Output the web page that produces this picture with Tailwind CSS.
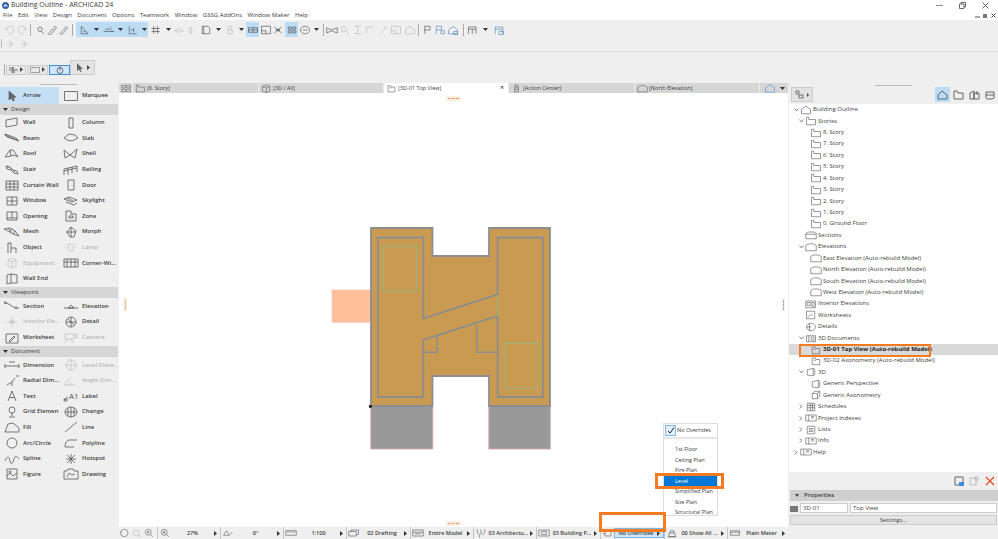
<!DOCTYPE html>
<html lang="en">
<head>
<meta charset="UTF-8">
<title>Building Outline - ARCHICAD 24</title>
<script src="https://cdn.jsdelivr.net/npm/@tailwindcss/browser@4"></script>
</head>
<body class="relative w-[998px] h-[539px] overflow-hidden bg-[#efefef] font-['Open_Sans',sans-serif] text-[#3c3c3c]">

<!-- title + menu -->
<div class="flex items-center h-[10px] bg-white text-[7px] pl-[2px]">
  <svg class="w-[7px] h-[7px] mr-[2px]" viewBox="0 0 8 8"><circle cx="4" cy="4" r="4" fill="#2d5fa8"/><path d="M1 5l3-3 3 3z" fill="#cfe0f5"/></svg>
  <span>Building Outline - ARCHICAD 24</span>
  <div class="ml-auto flex items-center gap-[16px] pr-[9px]">
    <svg class="w-[7px] h-[7px]" viewBox="0 0 7 7"><path d="M0 3.5h7" stroke="#888"/></svg>
    <svg class="w-[7px] h-[7px]" viewBox="0 0 7 7" fill="none" stroke="#444" stroke-width=".8"><path d="M.5 2h4.500v4.500h-4.500zM2 2V.5h4.500V5H5"/></svg>
    <svg class="w-[7px] h-[7px]" viewBox="0 0 7 7"><path d="M.5.5l6 6M6.500.5l-6 6" stroke="#444" stroke-width=".8"/></svg>
  </div>
</div>
<div class="flex items-center h-[10px] bg-white text-[6px] pl-[3px] gap-[5.500px]">
  <span>File</span><span>Edit</span><span>View</span><span>Design</span><span>Document</span><span>Options</span><span>Teamwork</span><span>Window</span><span>GSSG AddOns</span><span>Window Maker</span><span>Help</span>
  <div class="ml-auto flex items-center gap-[3px] pr-[2px]">
    <svg class="w-[5px] h-[5px]" viewBox="0 0 5 5"><path d="M0 4h5" stroke="#555"/></svg>
    <svg class="w-[5px] h-[5px]" viewBox="0 0 5 5"><path d="M0 1h4v4h-4z" fill="#777"/></svg>
    <svg class="w-[5px] h-[5px]" viewBox="0 0 5 5"><path d="M.5.5l4 4M4.500.5l-4 4" stroke="#444"/></svg>
  </div>
</div>

<!-- toolbars -->
<div class="h-[32px] border-b border-[#dcdcdc] pt-[2px]">
  <div id="bar1" class="flex items-center h-[15px] pl-[3px]"></div>
  <div id="bar2" class="flex items-center h-[13px] pl-[1px]"></div>
</div>
<div class="h-[31px] flex items-center pl-[4px] pb-[1px]">
  <div class="w-px h-[11px] bg-[#aaa] mr-px mt-[5px]"></div>
  <div class="flex items-center h-[10px] w-[20px] border border-[#ccc] bg-[#e8e8e8] mt-[5px] justify-center gap-[2px]">
    <svg class="w-[9px] h-[6px]" viewBox="0 0 9 6" fill="none" stroke="#555" stroke-width=".8"><path d="M0 1h5M0 3h9M2 5h4M4 0v6"/></svg><svg class="w-[3px] h-[5px]" viewBox="0 0 3 5"><path d="M0 0l3 2.500-3 2.500z" fill="#444"/></svg>
  </div>
  <div class="flex items-center h-[10px] w-[21px] border border-[#ccc] bg-[#e8e8e8] mt-[5px] ml-px justify-center gap-[2px]">
    <svg class="w-[10px] h-[6px]" viewBox="0 0 10 6" fill="none" stroke="#555" stroke-width=".8" stroke-dasharray="1 .6"><path d="M.5.5h9v5h-9z"/></svg><svg class="w-[3px] h-[5px]" viewBox="0 0 3 5"><path d="M0 0l3 2.500-3 2.500z" fill="#444"/></svg>
  </div>
  <div class="flex items-center h-[10px] w-[21px] border border-[#3f8fd6] bg-[#cfe5f8] mt-[5px] ml-px justify-center">
    <svg class="w-[8px] h-[8px]" viewBox="0 0 8 8" fill="none" stroke="#555" stroke-width=".8"><circle cx="4" cy="4.500" r="3"/><path d="M4 0v4.500"/></svg>
  </div>
  <div class="flex items-center h-[15px] w-[25px] border border-[#ccc] bg-[#e4e4e4] justify-center gap-[4px]">
    <svg class="w-[7px] h-[9px]" viewBox="0 0 7 9"><path d="M1 0v8l2-1.500 1.200 2.500 1.300-.6-1.200-2.400h2.700z" fill="#666"/></svg><svg class="w-[3px] h-[5px]" viewBox="0 0 3 5"><path d="M0 0l3 2.500-3 2.500z" fill="#444"/></svg>
  </div>
</div>

<div class="flex h-[456px]">
  <!-- tool box -->
  <aside class="w-[119px] shrink-0 pt-[4px] relative">
    <div class="absolute top-[1px] left-[40px] w-[37px] h-px bg-[#bbb]"></div>
    <div id="tools"></div>
  </aside>

  <!-- views -->
  <main class="w-[669px] shrink-0 flex flex-col">
    <div id="tabs" class="flex h-[10px] bg-[#d6d6d6] text-[5.500px] items-stretch"></div>
    <div class="relative flex-1 bg-white">
      <div class="absolute left-[327px] top-[3px] w-[15px] h-[5px] bg-[#fdeee2] flex items-center justify-center"><div class="w-[11px] border-t border-dashed border-[#e8a070]"></div></div>
      <div class="absolute left-[327px] bottom-[1px] w-[15px] h-[5px] bg-[#fdeee2] flex items-center justify-center"><div class="w-[11px] border-t border-dashed border-[#e8a070]"></div></div>
      <div class="absolute left-[4px] top-[205px] w-[4px] h-[13px] bg-[#fdeee2] flex items-center justify-center"><div class="h-[10px] border-l border-dashed border-[#e8b898]"></div></div>
      <div class="absolute right-[3px] top-[205px] w-[4px] h-[13px] bg-[#f3f3f3] flex items-center justify-center"><div class="h-[10px] border-l border-dashed border-[#aaa]"></div></div>
      <!-- plan: svg coordinates are page coordinates -->
      <svg class="absolute left-0 top-0 w-[669px] h-[423px]" viewBox="119 93 669 423" fill="none">
        <path d="M332 290h38.300v32.300h-38.300z" fill="#ffbf9b" stroke="#f6c8b4" stroke-width=".8"/>
        <path d="M370.800 406.500h62v42.500h-62zM488.800 406.500h61.500v42.500h-61.500z" fill="#999" stroke="#d8a6a6" stroke-width=".8"/>
        <path d="M371 228h61.500v28h56.500v-28h61v178h-61v-30h-56.500v30h-61.500z" fill="#c99a52" stroke="#8d8d8d" stroke-width="1.800"/>
        <path d="M378 237.500h45.300v81L497.700 294.300v-56.800h45.300v159.500h-45.300v-81L423.300 340v57h-45.300z" stroke="#8d8d8d" stroke-width="1.800"/>
        <path d="M423.300 352.300h14v-17M476.700 325v27.300h21" stroke="#8d8d8d" stroke-width="1.500"/>
        <path d="M497.700 295v21" stroke="#8db98a" stroke-width="1"/>
        <path d="M383 246h33.700v45.300h-33.700zM504.300 343.300h33.700v45h-33.700z" stroke="#8db98a" stroke-width=".8"/>
        <path d="M369 405h2.800v2.800h-2.800z" fill="#222"/>
      </svg>
    </div>
    <div id="scalebar" class="flex items-center h-[12px] text-[5.500px] bg-[#efefef]"></div>
  </main>

  <!-- navigator -->
  <aside class="flex-1 flex flex-col">
    <div class="h-[21px] flex items-center relative pl-[3px]">
      <div class="absolute top-[2px] left-[87px] w-[37px] h-px bg-[#bbb]"></div>
      <div class="flex items-center justify-center gap-[3px] w-[22px] h-[15px] bg-[#e2e2e2] border border-[#ccc] mt-[2px]">
        <svg class="w-[9px] h-[9px]" viewBox="0 0 9 9" fill="none" stroke="#555" stroke-width=".8"><path d="M1 1h3v3h-3zM4 5h4v3h-4z"/></svg><svg class="w-[2px] h-[4px]" viewBox="0 0 2 4"><path d="M0 0l2 2-2 2z" fill="#444"/></svg>
      </div>
      <div class="ml-auto flex items-center pr-[1px] mt-[2px]">
        <div class="w-[15px] h-[15px] bg-[#bcdcf4] flex items-center justify-center"><svg class="w-[11px] h-[10px]" viewBox="0 0 11 10" fill="none" stroke="#444" stroke-width=".8"><path d="M1 9V5l4-4 5 4v4z"/></svg></div>
        <div class="w-[16px] flex justify-center"><svg class="w-[11px] h-[10px]" viewBox="0 0 11 10" fill="none" stroke="#444" stroke-width=".8"><path d="M1 1h3l1 2h5v6h-9z"/></svg></div>
        <div class="w-[16px] flex justify-center"><svg class="w-[11px] h-[10px]" viewBox="0 0 11 10" fill="none" stroke="#444" stroke-width=".8"><path d="M1 3l4-2v8h-4zM5 3h5v6h-5zM8 1v4"/></svg></div>
        <div class="w-[15px] flex justify-center"><svg class="w-[10px] h-[10px]" viewBox="0 0 10 10" fill="none" stroke="#444" stroke-width=".8"><path d="M1 2h8v6l-2 1h-5l-1-1zM1 5h8"/></svg></div>
      </div>
    </div>
    <div id="tree" class="h-[368px] bg-white text-[6px] pl-[2px] pt-[-1px] ml-px"></div>
    <div class="h-[18px] flex items-center justify-end gap-[5px] pr-[3px]">
      <svg class="w-[10px] h-[10px]" viewBox="0 0 10 10" fill="none" stroke="#666"><path d="M1 1h8v8h-8z"/><path d="M5 6h5v4h-5z" fill="#3b8fe0" stroke="none"/></svg>
      <svg class="w-[10px] h-[10px]" viewBox="0 0 10 10" fill="none" stroke="#bbb"><path d="M1 2h6v7h-6zM6 1h3v3h-3z"/></svg>
      <svg class="w-[10px] h-[10px] ml-[1px]" viewBox="0 0 10 10"><path d="M1 1l8 8M9 1l-8 8" stroke="#e8502a" stroke-width="1.300"/></svg>
    </div>
    <div class="h-[11px] bg-[#cfcfcf] ml-[2px] flex items-center text-[6px] font-semibold pl-[5px] gap-[5px]">
      <svg class="w-[4px] h-[3px]" viewBox="0 0 4 3"><path d="M0 0h4l-2 3z" fill="#444"/></svg>Properties
    </div>
    <div class="flex items-center h-[10px] mt-[2px] ml-[2px] text-[6px] gap-[2px]">
      <svg class="w-[8px] h-[7px] shrink-0" viewBox="0 0 8 7"><path d="M0 1h8v6h-8z" fill="#777"/></svg>
      <div class="w-[48px] h-[10px] bg-white border border-[#ccc] flex items-center pl-[2px]">3D-01</div>
      <div class="flex-1 h-[10px] bg-white border border-[#ccc] flex items-center pl-[2px] mr-px">Top View</div>
    </div>
    <div class="h-[10px] mt-[2px] ml-[2px] mr-px bg-[#e4e4e4] border border-[#ccc] flex items-center justify-center text-[6px]">Settings...</div>
  </aside>
</div>

<!-- status bar -->
<div class="flex items-center h-[11px] text-[5.800px]">
  <span class="pl-[1px]">Click an Element or Draw a Selection Area. Press and Hold Ctrl+Shift to Toggle Element/Sub-Element Selection.</span>
  <svg class="ml-auto w-[9px] h-[8px]" viewBox="0 0 9 8" fill="none" stroke="#555"><path d="M.5 1h6v5h-6zM3 3h5.500v4.500h-5.500z"/></svg>
  <div class="w-[67px] h-[11px] ml-[6px] mr-[5px] bg-[#f4f4f4] flex items-center pl-[3px] text-[6.500px] text-[#a8a8a8]">GRAPHISOFT ID</div>
</div>

<!-- scale preset popup -->
<div class="absolute left-[663px] top-[423px] w-[55px] h-[93px] bg-white border border-[#ddd] text-[5.500px] z-10">
  <div class="flex items-center h-[15px] border-b-2 border-[#e5e5e5] gap-[1px]">
    <div class="w-[11px] h-[11px] ml-px border border-[#7db8e8] bg-[#e3f0fb] flex items-center justify-center"><svg class="w-[8px] h-[7px]" viewBox="0 0 8 7" fill="none"><path d="M1 4l2 2 4-5.500" stroke="#222"/></svg></div>
    <span>No Overrides</span>
  </div>
  <div class="pt-[5px] leading-[10.500px]">
    <div class="pl-[11px]">1st Floor</div>
    <div class="pl-[11px]">Ceiling Plan</div>
    <div class="pl-[11px]">Fire Plan</div>
    <div class="pl-[11px] bg-[#0078d7] text-white">Level</div>
    <div class="pl-[11px]">Simplified Plan</div>
    <div class="pl-[11px]">Site Plan</div>
    <div class="pl-[11px]">Structural Plan</div>
  </div>
</div>

<!-- orange callouts -->
<div class="absolute left-[655px] top-[473px] w-[69px] h-[16px] border-[3px] border-[#f47b20] z-20"></div>
<div class="absolute left-[599px] top-[512px] w-[67px] h-[20px] border-[3px] border-[#f47b20] z-20"></div>
<div class="absolute left-[799px] top-[344px] w-[132px] h-[13px] border-2 border-[#f47b20] z-20"></div>

<script>
// stroke icons, 16x12 box
const P = {
  arrow:'M5 1v9l2.500-2 1.500 3 1.500-.7-1.500-3h3z', marquee:'M1.500 1.500h13v9h-13z', wall:'M2 3l11-2v7l-11 2z', column:'M6 1h4v10h-4z',
  beam:'M1 2l11 4 3 3-12-4zM1 2v1l12 5', slab:'M1 6l5-4 6 1 3 3-6 3-5-1z', roof:'M1 9l5-7 3 0 5 7-4-2-3 1zM6 2l1 6', shell:'M1 2l6 5 7-6-2 9-5-3-5 3z',
  stair:'M2 2l4 1 3 3 4 1 1 3-4-1-3-3-4-1zM4 2v2M7 4v2M10 6v2', railing:'M1 5l13-3M1 5v6M5 4v7M9 3v6M14 2v6M1 7l13-3', curtain:'M2 2h12v9h-12zM6 2v9M10 2v9M2 5h12M2 8h12', door:'M5 1h6v10h-6zM9 6v.5',
  window:'M3 2h10v8h-10zM8 2v8M3 6h10', skylight:'M1 4l5-2 8 3-5 2zM3 7l8 3 3-2M4 3l6 3', opening:'M3 2h10v8h-10zM8 2v6M3 8h10', zone:'M3 1h5v3h5v7h-10zM6 6h4v2h-4z',
  mesh:'M0 3l6-1 5 3 4 5-6-2-5-3zM4 2l3 4M9 3l-3 2M11 5l-2 3', morph:'M8 1l5 4-2 6h-4l-3-5zM8 1v10M3 6h10', object:'M4 1h3v5h5v5M4 1v10M7 6v5', lamp:'M5 5a3 3 0 1 1 6 0c0 2-1.500 2-1.500 4h-3c0-2-1.500-2-1.500-4zM2 5h1M13 5h1M4 1l1 1M12 1l-1 1',
  equip:'M8 1l4 2v6l-4 2-4-2v-6zM4 3l4 2 4-2M8 5v6', corner:'M1 2h14v8h-14zM4 2v8M8 2v8M12 2v8M1 5h14', wallend:'M3 2l4-1v9l-4 1zM7 1l6 1v8l-6 0',
  section:'M0 3h3l8 5h4M1 1v3M12 6v3M3 3l-1 1', elevation:'M1 8h14M5 8l3-3 3 3z', interior:'M8 1v10M3 6h10M6 6a2 2 0 1 0 4 0 2 2 0 1 0-4 0', detail:'M3 6a5 5 0 1 0 10 0 5 5 0 1 0-10 0M3 6h10M8 1v10M5 3l6 6',
  worksheet:'M2 2h12v9h-12zM5 9l5-5 1 1-5 5z', camera:'M2 2h9v5h-9zM11 3l3-1v4l-3-1zM4 7l-2 4M8 7l2 4', dim:'M1 7h14M1 5v4M15 5v4M5 3h6', leveldim:'M3 6a5 5 0 1 0 10 0 5 5 0 1 0-10 0M8 0v12M2 6h12',
  radial:'M8 7L3 10M8 7l3-4M8 7v4M12 1h3', angle:'M1 10h11M1 10l7-8M7 7q1 1 1 3', text:'M4 11L8 1l4 10M5.500 7.500h5', label:'M1 10l4-3M1 9h3v2h-3z',
  grid:'M5 4a3 3 0 1 0 6 0 3 3 0 1 0-6 0M8 7v3M5 11h6', change:'M2 6a6 5 0 1 0 12 0 6 5 0 1 0-12 0M2 6h12M8 1v10M5 2v8M11 2v8', fill:'M1 11l3-8 5-1 6 5v4z', line:'M2 11L14 1',
  arc:'M3 6a5 5 0 1 0 10 0 5 5 0 1 0-10 0', polyline:'M2 10c0-5 2-7 5-7h7M2 10h9', spline:'M1 8c2-5 4-5 5 0s3 2 4-2 3-3 5 0', hotspot:'M8 1v10M3 6h10M4 2l8 8M12 2l-8 8',
  figure:'M3 1h10v10h-10zM3 8l3-3 3 3 4-3M6 3a1 1 0 1 0 .1 0', drawing:'M1 3h3l1-2h5l1 2h4v8h-14zM4 9l2-4 3 2 3-1',
  undo:'M3 3v3h3M3 6a5 5 0 1 1 2 4', redo:'M13 3v3h-3M13 6a5 5 0 1 0-2 4', find:'M5 5a3 3 0 1 0 6 0 3 3 0 1 0-6 0M10 8l3 3', drop:'M3 11l6-6 2 2-6 6zM9 4l3-3 2 2-3 3',
  tri:'M3 11V1l9 10zM6 8h2', curveline:'M1 8h14M3 5h5l3-3M10 5l3 3', stairbar:'M3 1v10h10M5 6h4v3M9 3v3', hash:'M5 1v10M10 1v10M2 4h11M2 8h11', flat:'M2 7l6-3 6 3-6 2z', thin:'M6 2l3 1v6l-1 2-2-4z',
  doc:'M3 1h8l2 2v8h-10zM5 1v10', lock:'M5 6h6v5h-6zM6 6V3a2 2 0 0 1 4 0v3', bars:'M2 3h12v6h-12zM2 6h12M8 3v6', cross:'M3 2l10 8M13 2l-10 8M6 5h4v2h-4z', dots:'M3 2h4v3h-4zM9 2h4v3h-4zM3 7h4v3h-4zM9 7h4v3h-4z',
  rot:'M2 6a6 5 0 1 0 12 0 6 5 0 1 0-12 0M5 6h6', bow:'M1 3l6 3 8-3v7l-8-3-6 3z', mag:'M3 5a3.500 3.500 0 1 0 7 0 3.500 3.500 0 1 0-7 0M9 8l4 3', sigma:'M4 1h8M4 11h8M5 1l4 5-4 5', corn:'M3 11V2h9', pen:'M4 11l8-8M10 1l3 3', box:'M2 1h12v10h-12zM2 7h6v4', house:'M2 11V5l6-4 6 4v6z',
  flag:'M5 11V1h7v5h-7', flagplus:'M3 11V1h7v5h-7M9 7h5v4h-5z', roundhouse:'M2 11V6l6-5 6 5v5zM9 8h5v4h-5z', cabinet:'M2 11V2h10v9M2 5h10M7 5v6', cabblue:'M3 11V2h10v9M3 5h10M8 8h6v4h-6z', ghost:'M5 2a4 4 0 1 1 0 8M3 6h8', fold:'M1 10V1h4l1 2h9v7z', cube:'M2 3l6-2 5 2v7l-5 2-6-2zM2 3l6 2 5-2M8 5v7', page:'M3 2h4l1 2h5v7h-10zM5 5h3',
  tower:'M6 1h4l1 10h-6zM5 4h6M5 7h6', eleva:'M1 11V4c4-3 10-3 14 0v7z', grid4:'M1 1h6v4h-6zM9 1h6v4h-6zM1 7h6v4h-6zM9 7h6v4h-6z',
  story:'M2 11V1h3v3h9v7z', section2:'M1 11V4l3-2h8l3 2v7zM1 5h14', interiorel:'M1 2h13v9h-13zM3 4h4v4h-4zM9 4h3v5h-3z', sheet:'M2 1h11v10h-11zM4 9l4-4 2 2', circle:'M2 6a6 5 0 1 0 12 0 6 5 0 1 0-12 0M6 1v10M2 6h6', doc3d:'M2 3h12v8h-12zM5 3v8M8 5h4v4h-4z', view3d:'M3 4h7v7h-7zM3 4l3-3h7v7l-3 3M10 4l3-3', persp:'M3 3l8-2v10l-8-1zM11 1l2 2v6l-2 2', table:'M3 1h10v10h-10zM3 4h10M3 7h10M7 1v10M10 1v10', list:'M3 1h10v10h-10zM5 4h6M5 6h6M5 8h6', book:'M1 2h14v8h-14zM5 2v8M8 4h4M8 6h4',
  pan:'M2 6a5 5 0 1 0 10 0 5 5 0 1 0-10 0M2 6l2-2', zoom0:'M3 6a4 4 0 1 0 8 0 4 4 0 1 0-8 0M10 9l3 2', zoomin:'M3 5a4 4 0 1 0 8 0 4 4 0 1 0-8 0M5 5h4M7 3v4M10 8l3 3', angle0:'M2 9l4-6 4 6zM11 6h3', scale:'M1 3h14v6h-14zM4 3v3M8 3v3M12 3v3', layers:'M1 10V4h10v6zM4 4V2h10v6h-3', model:'M1 2h14v8h-14zM1 5h14M4 7h8', pens:'M3 1v4l3 4v3M13 1v4l-3 4M8 1v7', building:'M1 2h14v8h-14zM5 4h6v4h-6z', palette:'M4 2h8v8h-8zM1 4h3M1 7h3M6 4h4', mep:'M4 11V6h8v5zM6 6V3h4v3M2 11h12', plain:'M2 3h12v6h-12zM2 5h12'
};
const svg = (k, cls, stroke='#555', sw='.8', fill='none') => `<svg class="${cls}" viewBox="0 0 16 12" fill="${fill}" stroke="${stroke}" stroke-width="${sw}"><path d="${P[k]}"/></svg>`;
const arrowSm = '<svg class="w-[3px] h-[5px]" viewBox="0 0 3 5"><path d="M0 0l3 2.500-3 2.500z" fill="#333"/></svg>';
const arrowDn = '<svg class="w-[5px] h-[3px]" viewBox="0 0 5 3"><path d="M0 0h5l-2.500 3z" fill="#333"/></svg>';

// top toolbar: [icon, width, on, off]
const bar1 = [['undo',13,0,1],['redo',12,0,1],['|',5],['find',13],['drop',12],['drop',11],['|',7],['tri',17,1],['v',7,1],['curveline',17,1],['v',7,1],['stairbar',17,1],['v',7,1],['hash',15],['v',10],['flat',12,0,1],['thin',12,0,1],['_',2],['doc',14],['v',10],['_',1],['lock',12,0,1],['v',10],['bars',13,1],['box',13],['cross',12],['_',1],['dots',13,1],['rot',14],['v',9],['|',4],['bow',13],['mag',13,0,1],['sigma',13,0,1],['corn',12,0,1],['pen',13,0,1],['box',14,0,1],['house',13,0,1],['|',5],['flag',12],['flagplus',14],['roundhouse',12],['|',8],['cabinet',12],['v',13],['cabblue',13]];
document.getElementById('bar1').innerHTML = bar1.map(([k,w,on,off]) => {
  const bg = on ? 'bg-[#bcdcf4]' : '';
  let inner = '';
  if (k === '|') inner = '<div class="w-px h-[12px] bg-[#aaa]"></div>';
  else if (k === 'v') inner = arrowDn;
  else if (k !== '_') inner = svg(k, 'w-[12px] h-[10px]', off ? '#b5b5b5' : k==='flagplus'||k==='roundhouse'||k==='cabblue' ? '#4a7fb5' : '#444');
  return `<div class="flex items-center justify-center h-[15px] ${bg}" style="width:${w}px">${inner}</div>`;
}).join('');
document.getElementById('bar2').innerHTML = '<div class="w-px h-[9px] bg-[#bbb] mr-[3px]"></div>' + svg('ghost','w-[12px] h-[10px] mr-[2px]','#bbb') + svg('ghost','w-[12px] h-[10px]','#bbb');

// tool box
const rowH = 'h-[15.600px]';
const section = (name) => `<div class="flex items-center h-[11px] bg-[#d6d6d6] text-[6px] pl-[3px] gap-[3px] my-[-.5px] w-[118px]">${arrowDn}<span>${name}</span></div>`;
const tool = ([k,name,off]) => `<div class="flex items-center ${rowH} ${off?'text-[#b9b9b9]':''}"><span class="w-[23px] flex justify-center shrink-0">${k==='label'?'<svg class="w-[16px] h-[12px]" viewBox="0 0 16 12" fill="none" stroke="#555" stroke-width=".8"><path d="'+P.label+'"/><text x="6" y="9" font-size="8" stroke="none" fill="#555">A1</text></svg>':svg(k,'w-[16px] h-[12px]',off?'#c4c4c4':'#555')}</span><span class="whitespace-nowrap text-[6px] font-semibold overflow-hidden">${name}</span></div>`;
const groups = [
  ['Design',[['wall','Wall'],['column','Column'],['beam','Beam'],['slab','Slab'],['roof','Roof'],['shell','Shell'],['stair','Stair'],['railing','Railing'],['curtain','Curtain Wall'],['door','Door'],['window','Window'],['skylight','Skylight'],['opening','Opening'],['zone','Zone'],['mesh','Mesh'],['morph','Morph'],['object','Object'],['lamp','Lamp',1],['equip','Equipment',1],['corner','Corner-Wi...'],['wallend','Wall End']]],
  ['Viewpoint',[['section','Section'],['elevation','Elevation'],['interior','Interior Ele...',1],['detail','Detail'],['worksheet','Worksheet'],['camera','Camera',1]]],
  ['Document',[['dim','Dimension'],['leveldim','Level Dime...',1],['radial','Radial Dim...'],['angle','Angle Dim...',1],['text','Text'],['label','Label'],['grid','Grid Element'],['change','Change'],['fill','Fill'],['line','Line'],['arc','Arc/Circle'],['polyline','Polyline'],['spline','Spline'],['hotspot','Hotspot'],['figure','Figure'],['drawing','Drawing']]]
];
const toolGrid = (items) => `<div class="grid grid-cols-[59px_60px] py-[1px]">${items.map(tool).join('')}</div>`;
document.getElementById('tools').innerHTML =
  `<div class="grid grid-cols-[59px_60px] h-[17px] items-center"><div class="flex items-center h-[17px] bg-[#c5e0f5]"><span class="w-[23px] flex justify-center">${svg('arrow','w-[16px] h-[12px]','#555','.6','#666')}</span><span class="text-[6px] font-semibold">Arrow</span></div><div class="flex items-center"><span class="w-[23px] flex justify-center">${svg('marquee','w-[16px] h-[12px]')}</span><span class="text-[6px] font-semibold">Marquee</span></div></div>` +
  groups.map(([n,items]) => section(n) + toolGrid(items)).join('');

// view tabs
const tabs = [['grid4','',14],['story','[8. Story]',126],['cube','[3D / All]',125],['page','[3D-01 Top View]',125,1],['tower','[Action Center]',126],['eleva','[North Elevation]',125]];
document.getElementById('tabs').innerHTML = tabs.map(([k,t,w,on]) => `<div class="flex items-center gap-[1px] pl-[2px] border-r border-[#eee] relative ${on?'bg-white':''}" style="width:${w}px">${svg(k,'w-[11px] h-[9px]','#555')}<span>${t}</span>${on?'<span class="absolute right-[4px] text-[7px] text-[#222]">×</span>':''}</div>`).join('') +
  `<div class="flex items-center pl-[3px] gap-[3px]">${svg('house','w-[14px] h-[9px]','#4a90e2')}${arrowDn}</div>`;

// bottom scale bar: [icon, value, width, on]
const segs = [['zoomin','27%',63],['angle0','0°',63],['scale','1:100',63],['layers','02 Drafting',64],['model','Entire Model',63],['pens','03 Architectu...',63],['building','03 Building P...',64],['palette','No Overrides',64,1],['mep','00 Show All ...',63],['plain','Plain Meter',61]];
document.getElementById('scalebar').innerHTML =
  `<div class="flex items-center w-[38px] pl-[0px]">${svg('pan','w-[12px] h-[10px]','#666')}${svg('zoom0','w-[12px] h-[10px]','#bbb')}${svg('zoomin','w-[12px] h-[10px]','#666')}</div>` +
  segs.map(([k,t,w,on]) => `<div class="flex items-center h-[12px] border-l border-[#c4c4c4] pl-[1px]" style="width:${w}px">${svg(k,'w-[12px] h-[10px] shrink-0','#555')}<div class="flex items-center flex-1 h-[10px] ${on?'bg-[#cfe5f8] border border-[#7db8e8]':''}"><span class="flex-1 text-center whitespace-nowrap font-semibold">${t}</span><span class="flex w-[5px] mr-[1px]">${arrowSm}</span></div></div>`).join('');

// project map
const T = [
  [0,'v','house','Building Outline'],[1,'v','story','Stories'],[2,'','story','8. Story'],[2,'','story','7. Story'],[2,'','story','6. Story'],[2,'','story','5. Story'],[2,'','story','4. Story'],[2,'','story','3. Story'],[2,'','story','2. Story'],[2,'','story','1. Story'],[2,'','story','0. Ground Floor'],
  [1,'','section2','Sections'],[1,'v','eleva','Elevations'],[2,'','eleva','East Elevation (Auto-rebuild Model)'],[2,'','eleva','North Elevation (Auto-rebuild Model)'],[2,'','eleva','South Elevation (Auto-rebuild Model)'],[2,'','eleva','West Elevation (Auto-rebuild Model)'],
  [1,'','interiorel','Interior Elevations'],[1,'','sheet','Worksheets'],[1,'','circle','Details'],[1,'v','doc3d','3D Documents'],[2,'','page','3D-01 Top View (Auto-rebuild Model)',1],[2,'','page','3D-02 Axonometry (Auto-rebuild Model)'],
  [1,'v','persp','3D'],[2,'','persp','Generic Perspective'],[2,'','view3d','Generic Axonometry'],[1,'>','table','Schedules'],[1,'>','book','Project Indexes'],[1,'>','list','Lists'],[1,'>','book','Info'],[0,'>','book','Help']
];
const chev = {v:'<svg class="w-[5px] h-[4px]" viewBox="0 0 5 4" fill="none"><path d="M.5.5l2 2.500 2-2.500" stroke="#666" stroke-width=".8"/></svg>', '>':'<svg class="w-[4px] h-[5px]" viewBox="0 0 4 5" fill="none"><path d="M.5.5l2.500 2-2.500 2" stroke="#777" stroke-width=".8"/></svg>', '':''};
const indent = ['pl-[3px]','pl-[8px]','pl-[13px]'];
document.getElementById('tree').innerHTML = T.map(([l,c,k,t,sel]) => `<div class="flex items-center h-[11.430px] ${indent[l]} ${sel?'bg-[#d9d9d9] font-bold -ml-[2px] pl-[15px] text-[#222]':''}"><span class="w-[6px] flex items-center shrink-0">${chev[c]}</span>${svg(k,'w-[12px] h-[10px] shrink-0','#555')}<span class="ml-[1px] whitespace-nowrap">${t}</span></div>`).join('');
</script>
</body>
</html>
